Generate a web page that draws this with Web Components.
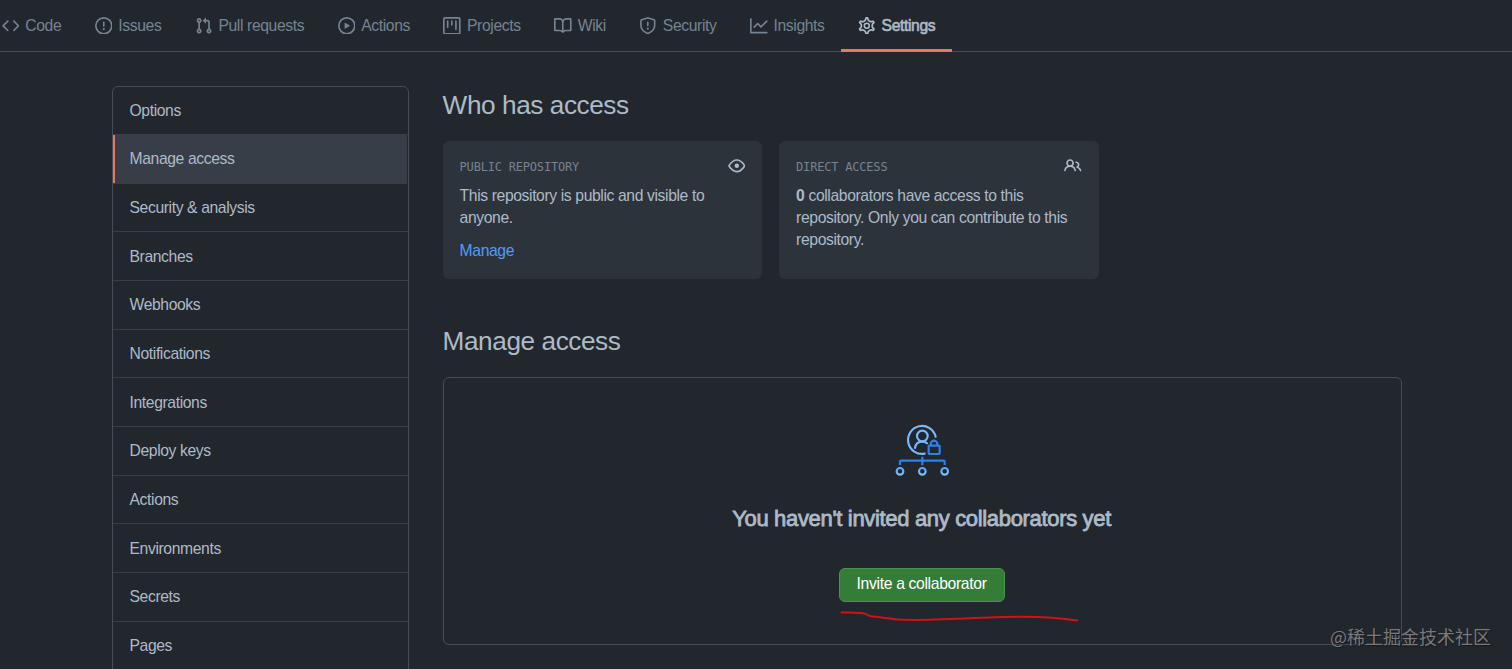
<!DOCTYPE html>
<html lang="en">
<head>
<meta charset="utf-8">
<title>Manage access</title>
<style>
  html, body {
    margin: 0;
    height: 669px;
    overflow: hidden;
    background: #22272e;
  }

  body {
    --canvas: #22272e;
    --subtle: #2d333b;
    --border: #444c56;
    --borderMuted: #373e47;
    --text: #adbac7;
    --textMuted: #768390;
    --link: #539bf5;
    --accent: #ec775c;
    color: var(--text);
    font: 15.7px/22px "Liberation Sans", Arial, sans-serif;
    letter-spacing: -0.38px;
  }
</style>
</head>
<body>
<settings-page>
  <repo-nav slot="nav">
    <repo-tab icon="code">Code</repo-tab>
    <repo-tab icon="issue">Issues</repo-tab>
    <repo-tab icon="pull">Pull requests</repo-tab>
    <repo-tab icon="play">Actions</repo-tab>
    <repo-tab icon="project">Projects</repo-tab>
    <repo-tab icon="book">Wiki</repo-tab>
    <repo-tab icon="shield">Security</repo-tab>
    <repo-tab icon="graph">Insights</repo-tab>
    <repo-tab icon="gear" selected>Settings</repo-tab>
  </repo-nav>
  <side-menu slot="menu">
    <menu-row>Options</menu-row>
    <menu-row selected>Manage access</menu-row>
    <menu-row>Security &amp; analysis</menu-row>
    <menu-row>Branches</menu-row>
    <menu-row>Webhooks</menu-row>
    <menu-row>Notifications</menu-row>
    <menu-row>Integrations</menu-row>
    <menu-row>Deploy keys</menu-row>
    <menu-row>Actions</menu-row>
    <menu-row>Environments</menu-row>
    <menu-row>Secrets</menu-row>
    <menu-row>Pages</menu-row>
  </side-menu>
  <section-title>Who has access</section-title>
  <access-cards>
    <access-card icon="eye" label="PUBLIC REPOSITORY">
      This repository is public and visible to anyone.
      <span slot="action">Manage</span>
    </access-card>
    <access-card icon="people" label="DIRECT ACCESS">
      <b>0</b> collaborators have access to this repository. Only you can contribute to this repository.
    </access-card>
  </access-cards>
  <section-title>Manage access</section-title>
  <blank-slate>
    <span slot="title">You haven't invited any collaborators yet</span>
    <green-button>Invite a collaborator</green-button>
  </blank-slate>
  <water-mark slot="mark">@稀土掘金技术社区</water-mark>
</settings-page>

<script>
const icons = {
  code: '<path d="M4.72 3.22a.75.75 0 011.06 1.06L2.06 8l3.72 3.72a.75.75 0 11-1.06 1.06L.47 8.53a.75.75 0 010-1.06l4.25-4.25zm6.56 0a.75.75 0 10-1.06 1.06L13.94 8l-3.72 3.72a.75.75 0 101.06 1.06l4.25-4.25a.75.75 0 000-1.06l-4.25-4.25z"/>',
  issue: '<path d="M8 1.5a6.5 6.5 0 100 13 6.5 6.5 0 000-13zM0 8a8 8 0 1116 0A8 8 0 010 8zm9 3a1 1 0 11-2 0 1 1 0 012 0zm-.25-6.25a.75.75 0 00-1.5 0v3.5a.75.75 0 001.5 0v-3.5z"/>',
  pull: '<path d="M7.177 3.073L9.573.677A.25.25 0 0110 .854v4.792a.25.25 0 01-.427.177L7.177 3.427a.25.25 0 010-.354zM3.75 2.5a.75.75 0 100 1.5.75.75 0 000-1.5zm-2.25.75a2.25 2.25 0 113 2.122v5.256a2.251 2.251 0 11-1.5 0V5.372A2.25 2.25 0 011.5 3.25zM11 2.5h-1V4h1a1 1 0 011 1v5.628a2.251 2.251 0 101.5 0V5A2.5 2.5 0 0011 2.5zm1 10.25a.75.75 0 111.5 0 .75.75 0 01-1.5 0zM3.75 12a.75.75 0 100 1.5.75.75 0 000-1.5z"/>',
  play: '<path d="M1.5 8a6.5 6.5 0 1113 0 6.5 6.5 0 01-13 0zM8 0a8 8 0 100 16A8 8 0 008 0zM6.379 5.227A.25.25 0 006 5.442v5.117a.25.25 0 00.379.214l4.264-2.559a.25.25 0 000-.428L6.379 5.227z"/>',
  project: '<path d="M1.75 0A1.75 1.75 0 000 1.75v12.5C0 15.216.784 16 1.75 16h12.5A1.75 1.75 0 0016 14.25V1.75A1.75 1.75 0 0014.25 0H1.75zM1.5 1.75a.25.25 0 01.25-.25h12.5a.25.25 0 01.25.25v12.5a.25.25 0 01-.25.25H1.75a.25.25 0 01-.25-.25V1.75zM11.75 3a.75.75 0 00-.75.75v7.5a.75.75 0 001.5 0v-7.5a.75.75 0 00-.75-.75zm-8.25.75a.75.75 0 011.5 0v5.5a.75.75 0 01-1.5 0v-5.5zM8 3a.75.75 0 00-.75.75v3.5a.75.75 0 001.5 0v-3.5A.75.75 0 008 3z"/>',
  book: '<path fill-rule="evenodd" d="M0 1.75A.75.75 0 01.75 1h4.253c1.227 0 2.317.59 3 1.501A3.744 3.744 0 0111.006 1h4.245a.75.75 0 01.75.75v10.5a.75.75 0 01-.75.75h-4.507a2.25 2.25 0 00-1.591.659l-.622.621a.75.75 0 01-1.06 0l-.622-.621A2.25 2.25 0 005.258 13H.75a.75.75 0 01-.75-.75V1.75zm8.755 3a2.25 2.25 0 012.25-2.25H14.5v9h-3.757c-.71 0-1.4.201-1.992.572l.004-7.322zm-1.504 7.324l.004-5.073-.002-2.253A2.25 2.25 0 005.003 2.5H1.5v9h3.757a3.75 3.75 0 011.994.574z"/>',
  shield: '<path d="M7.467.133a1.75 1.75 0 011.066 0l5.25 1.68A1.75 1.75 0 0115 3.48V7c0 1.566-.32 3.182-1.303 4.682-.983 1.498-2.585 2.813-5.032 3.855a1.7 1.7 0 01-1.33 0c-2.447-1.042-4.049-2.357-5.032-3.855C1.32 10.182 1 8.566 1 7V3.48a1.75 1.75 0 011.217-1.667l5.25-1.68zm.61 1.429a.25.25 0 00-.153 0l-5.25 1.68a.25.25 0 00-.174.238V7c0 1.358.275 2.666 1.057 3.86.784 1.194 2.121 2.34 4.366 3.297a.2.2 0 00.154 0c2.245-.956 3.582-2.104 4.366-3.298C13.225 9.666 13.5 8.36 13.5 7V3.48a.25.25 0 00-.174-.237l-5.25-1.68zM9 10.5a1 1 0 11-2 0 1 1 0 012 0zm-.25-5.75a.75.75 0 10-1.5 0v3a.75.75 0 001.5 0v-3z"/>',
  graph: '<path d="M1.5 1.75a.75.75 0 00-1.5 0v12.5c0 .414.336.75.75.75h14.5a.75.75 0 000-1.5H1.5V1.75zm14.28 2.53a.75.75 0 00-1.06-1.06L10 7.94 7.53 5.47a.75.75 0 00-1.06 0L3.22 8.72a.75.75 0 001.06 1.06L7 7.06l2.47 2.47a.75.75 0 001.06 0l5.25-5.25z"/>',
  gear: '<g fill="none" stroke="currentColor" stroke-width="1.4"><path transform="translate(-.8 -.8) scale(1.1)" d="M7.429 1.525a6.593 6.593 0 011.142 0c.036.003.108.036.137.146l.289 1.105c.147.56.55.967.997 1.189.174.086.341.183.501.29.417.278.97.423 1.53.27l1.102-.303c.11-.03.175.016.195.046.219.31.41.641.573.989.014.031.022.11-.059.19l-.815.806c-.411.406-.562.957-.53 1.456a4.588 4.588 0 010 .582c-.032.499.119 1.05.53 1.456l.815.806c.08.08.073.159.059.19a6.494 6.494 0 01-.573.99c-.02.029-.086.074-.195.045l-1.103-.303c-.559-.153-1.112-.008-1.529.27-.16.107-.327.204-.5.29-.449.222-.851.628-.998 1.189l-.289 1.105c-.029.11-.101.143-.137.146a6.613 6.613 0 01-1.142 0c-.036-.003-.108-.037-.137-.146l-.289-1.105c-.147-.56-.55-.967-.997-1.189a4.502 4.502 0 01-.501-.29c-.417-.278-.97-.423-1.53-.27l-1.102.303c-.11.03-.175-.016-.195-.046a6.492 6.492 0 01-.573-.989c-.014-.031-.022-.11.059-.19l.815-.806c.411-.406.562-.957.53-1.456a4.587 4.587 0 010-.582c.032-.499-.119-1.05-.53-1.456l-.815-.806c-.08-.08-.073-.159-.059-.19a6.44 6.44 0 01.573-.99c.02-.029.086-.075.195-.045l1.103.303c.559.153 1.112.008 1.529-.27.16-.107.327-.204.5-.29.449-.222.851-.628.998-1.189l.289-1.105c.029-.11.101-.143.137-.146z"/><circle cx="8" cy="8" r="2.25"/></g>',
  eye: '<path fill="none" stroke="currentColor" stroke-width="1.5" d="M1.05 7.6C2.2 5.9 4.7 2.75 8 2.75S13.8 5.9 14.95 7.6a.7.7 0 010 .8C13.8 10.1 11.3 13.25 8 13.25S2.2 10.1 1.05 8.4a.7.7 0 010-.8z"/><circle cx="8" cy="8" r="2"/>',
  people: '<path d="M5.5 3.5a2 2 0 100 4 2 2 0 000-4zM2 5.5a3.5 3.5 0 115.898 2.549 5.507 5.507 0 013.034 4.084.75.75 0 11-1.482.235 4.001 4.001 0 00-7.9 0 .75.75 0 01-1.482-.236A5.507 5.507 0 013.102 8.05 3.49 3.49 0 012 5.5zM11 4a.75.75 0 100 1.5 1.5 1.5 0 01.666 2.844.75.75 0 00-.416.672v.352a.75.75 0 00.574.73c1.2.289 2.162 1.2 2.522 2.372a.75.75 0 101.434-.44 5.01 5.01 0 00-2.56-3.012A3 3 0 0011 4z"/>'
};

// registers a custom element whose shadow root is cloned from one template
function define(name, html) {
  const template = document.createElement('template');
  template.innerHTML = html;
  window.customElements.define(name, class extends HTMLElement {
    constructor() {
      super();
      this.attachShadow({ mode: 'open' });
      this.shadowRoot.appendChild(template.content.cloneNode(true));
    }

    connectedCallback() {
      const $icon = this.shadowRoot.querySelector('.icon');
      const $label = this.shadowRoot.querySelector('.label');
      if ($icon) $icon.innerHTML = icons[this.getAttribute('icon')];
      if ($label) $label.textContent = this.getAttribute('label');
    }
  });
}

define('settings-page', `
  <style>
    :host {
      display: block;
      position: relative;
      height: 669px;
      overflow: hidden;
    }

    .columns {
      display: grid;
      grid-template-columns: 297px 959px;
      gap: 33.6px;
      padding: 34px 0 0 112px;
    }
  </style>
  <slot name="nav"></slot>
  <div class="columns">
    <slot name="menu"></slot>
    <main><slot></slot></main>
  </div>
  <slot name="mark"></slot>
`);

define('repo-nav', `
  <style>
    :host {
      display: flex;
      box-sizing: border-box;
      height: 52px;
      border-bottom: 1px solid var(--border);
      margin-left: -15px;
    }
  </style>
  <slot></slot>
`);

define('repo-tab', `
  <style>
    :host {
      display: flex;
      flex: none;
      align-items: center;
      box-sizing: border-box;
      height: 52px;
      gap: 6px;
      padding: 2px 16.72px 0;
      color: var(--textMuted);
      border-bottom: 3px solid transparent;
    }

    :host([selected]) {
      color: var(--text);
      border-color: var(--accent);
      -webkit-text-stroke: 0.6px currentColor;
    }

    svg {
      width: 17.6px;
      height: 17.6px;
      fill: currentColor;
    }
  </style>
  <svg class="icon" viewBox="0 0 16 16"></svg>
  <span><slot></slot></span>
`);

define('side-menu', `
  <style>
    :host {
      display: block;
      box-sizing: border-box;
      height: 640px;
      border: 1px solid var(--border);
      border-radius: 6px;
    }
  </style>
  <slot></slot>
`);

define('menu-row', `
  <style>
    :host {
      display: flex;
      align-items: center;
      box-sizing: border-box;
      height: 48.65px;
      padding: 1px 16.5px 0;
      border-bottom: 1px solid var(--borderMuted);
    }

    :host(:first-child) {
      height: 48.1px;
    }

    :host([selected]) {
      margin-right: 1px;
      background: var(--borderMuted);
      box-shadow: inset 2px 0 var(--accent);
    }
  </style>
  <slot></slot>
`);

define('section-title', `
  <style>
    :host {
      display: block;
      font-size: 26.2px;
      line-height: 38px;
      letter-spacing: -0.43px;
    }
  </style>
  <slot></slot>
`);

define('access-cards', `
  <style>
    :host {
      display: flex;
      gap: 17px;
      margin: 17px 0 43px;
    }
  </style>
  <slot></slot>
`);

define('access-card', `
  <style>
    :host {
      display: block;
      box-sizing: border-box;
      width: 319.5px;
      height: 138px;
      padding: 16px 17px;
      border-radius: 6px;
      background: var(--subtle);
    }

    header {
      display: flex;
      justify-content: space-between;
      height: 28px;
    }

    .label {
      font: 12px/21px "DejaVu Sans Mono", monospace;
      letter-spacing: -0.2px;
      color: var(--textMuted);
    }

    svg {
      width: 17.6px;
      height: 17.6px;
      fill: currentColor;
    }

    .action {
      margin-top: 11px;
      color: var(--link);
    }
  </style>
  <header>
    <span class="label"></span>
    <svg class="icon" viewBox="0 0 16 16"></svg>
  </header>
  <div><slot></slot></div>
  <div class="action"><slot name="action"></slot></div>
`);

define('blank-slate', `
  <style>
    :host {
      display: flex;
      position: relative;
      flex-direction: column;
      align-items: center;
      box-sizing: border-box;
      height: 268px;
      margin-top: 17px;
      padding: 44px 1px 0 0;
      border: 1px solid var(--border);
      border-radius: 6px;
    }

    .art {
      width: 54px;
      height: 54px;
      fill: none;
      stroke-width: 6.5;
    }

    .title {
      margin: 26px 0 32px;
      font-size: 22px;
      line-height: 34px;
      letter-spacing: -0.33px;
      -webkit-text-stroke: 0.8px currentColor;
    }

    .scribble {
      position: absolute;
      left: 396px;
      top: 231px;
      width: 242px;
      height: 16px;
      fill: none;
      stroke: #d01317;
      stroke-width: 2;
      stroke-linecap: round;
    }
  </style>
  <svg class="art" viewBox="45 35 162 162">
    <defs>
      <linearGradient id="fade" x1="0" y1="0" x2="0" y2="1">
        <stop offset="0" stop-color="#62a6f5"/>
        <stop offset="1" stop-color="#79bcff"/>
      </linearGradient>
    </defs>
    <g stroke="#78b7fa" stroke-linecap="round">
      <path d="M134 130A42 42 0 1 1 167 79"/>
      <circle cx="127" cy="77" r="16"/>
      <path d="M105 113C107 101 116 94 127 94C133 94 138 96 141 99"/>
    </g>
    <g stroke="#2a82f2">
      <rect x="146" y="106" width="33" height="25" rx="2"/>
      <path d="M152 106V101A10 10 0 0 1 172 101V106"/>
      <path d="M60 164V154Q60 151 63 151H191Q194 151 194 154V164M127 139V165"/>
    </g>
    <g stroke="url(#fade)">
      <circle cx="60" cy="183" r="10"/>
      <circle cx="127" cy="183" r="10"/>
      <circle cx="194" cy="183" r="10"/>
    </g>
  </svg>
  <div class="title"><slot name="title"></slot></div>
  <slot></slot>
  <svg class="scribble" viewBox="840 609 242 16">
    <path d="M841.5 612.5C852 612.5 864 612 867 614.5C870 617 873 616.5 880 617.2C888 618 894 619.7 905 619.8C935 620.5 965 618.5 993 617.3C1025 616 1054 616.5 1077 620.5"/>
  </svg>
`);

define('green-button', `
  <style>
    :host {
      display: block;
      box-sizing: border-box;
      width: 166px;
      height: 34px;
      border: 1px solid #46954a;
      border-radius: 6px;
      background: #347d39;
      color: #fff;
      line-height: 30px;
      letter-spacing: -0.33px;
      text-align: center;
    }
  </style>
  <slot></slot>
`);

define('water-mark', `
  <style>
    :host {
      position: absolute;
      right: 21px;
      bottom: 20px;
      color: #77797d;
      font: 18px/26px "Noto Sans CJK SC", sans-serif;
      letter-spacing: 0;
      text-shadow: 1px 1px 1px #15181c;
    }
  </style>
  <slot></slot>
`);
</script>
</body>
</html>
